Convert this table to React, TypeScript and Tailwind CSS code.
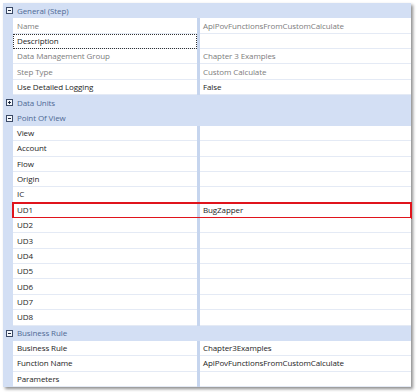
import React from 'react';

type Row =
  | { kind: 'group'; label: string; open: boolean }
  | { kind: 'prop'; label: string; value?: string; muted?: boolean; focus?: boolean; hot?: boolean };

const ROWS: Row[] = [
  { kind: 'group', label: 'General (Step)', open: true },
  { kind: 'prop', label: 'Name', value: 'ApiPovFunctionsFromCustomCalculate', muted: true },
  { kind: 'prop', label: 'Description', focus: true },
  { kind: 'prop', label: 'Data Management Group', value: 'Chapter 3 Examples', muted: true },
  { kind: 'prop', label: 'Step Type', value: 'Custom Calculate', muted: true },
  { kind: 'prop', label: 'Use Detailed Logging', value: 'False' },
  { kind: 'group', label: 'Data Units', open: false },
  { kind: 'group', label: 'Point Of View', open: true },
  { kind: 'prop', label: 'View' },
  { kind: 'prop', label: 'Account' },
  { kind: 'prop', label: 'Flow' },
  { kind: 'prop', label: 'Origin' },
  { kind: 'prop', label: 'IC' },
  { kind: 'prop', label: 'UD1', value: 'BugZapper', hot: true },
  { kind: 'prop', label: 'UD2' },
  { kind: 'prop', label: 'UD3' },
  { kind: 'prop', label: 'UD4' },
  { kind: 'prop', label: 'UD5' },
  { kind: 'prop', label: 'UD6' },
  { kind: 'prop', label: 'UD7' },
  { kind: 'prop', label: 'UD8' },
  { kind: 'group', label: 'Business Rule', open: true },
  { kind: 'prop', label: 'Business Rule', value: 'Chapter3Examples' },
  { kind: 'prop', label: 'Function Name', value: 'ApiPovFunctionsFromCustomCalculate' },
  { kind: 'prop', label: 'Parameters' },
];

function Expander({ open }: { open: boolean }) {
  return (
    <svg width="7" height="7" viewBox="0 0 7 7" className="shrink-0">
      <rect x="0.5" y="0.5" width="6" height="6" fill="#f4f7fc" stroke="#3b4a66" strokeWidth="1" />
      <line x1="2" y1="3.5" x2="5" y2="3.5" stroke="#1e2a40" strokeWidth="1" />
      {!open && <line x1="3.5" y1="2" x2="3.5" y2="5" stroke="#1e2a40" strokeWidth="1" />}
    </svg>
  );
}

export default function App() {
  return (
    <div
      className="w-[418px] h-[392px] bg-white pt-[3px] pl-[3px] tracking-[-0.1px]"
      style={{ fontFamily: '"Open Sans", "Noto Sans", sans-serif' }}
    >
      <div className="w-[408px] bg-[#d3dff4] shadow-[2px_2px_3px_rgba(0,0,0,0.45)]">
        {ROWS.map((row, i) => {
          if (row.kind === 'group') {
            return (
              <div key={i} className="h-[15.36px] flex items-center gap-[4px] pl-[3px] bg-[#d3dff4] text-[8px] text-[#4f6a94] leading-none">
                <Expander open={row.open} />
                <span>{row.label}</span>
              </div>
            );
          }
          const text = row.muted ? 'text-[#7d7d7d]' : 'text-[#1e1e1e]';
          return (
            <div key={i} className="relative h-[15.36px] flex text-[8px] leading-none">
              <div className="w-[10px] shrink-0 bg-[#d3dff4]" />
              <div
                className={`w-[184px] shrink-0 flex items-center pl-[4px] bg-white border-b border-[#e4eaf5] ${text} ${
                  row.focus ? 'outline outline-1 outline-dotted outline-[#333] -outline-offset-1' : ''
                }`}
              >
                {row.label}
              </div>
              <div className="w-[3px] shrink-0 bg-[#c6d5ee]" />
              <div className={`flex-1 flex items-center pl-[3px] bg-white border-b border-[#e4eaf5] ${text}`}>
                {row.value}
              </div>
              {row.hot && <div className="absolute left-[9px] -right-[1px] -top-[1px] -bottom-[1px] border-2 border-[#e0141c]" />}
            </div>
          );
        })}
      </div>
    </div>
  );
}
